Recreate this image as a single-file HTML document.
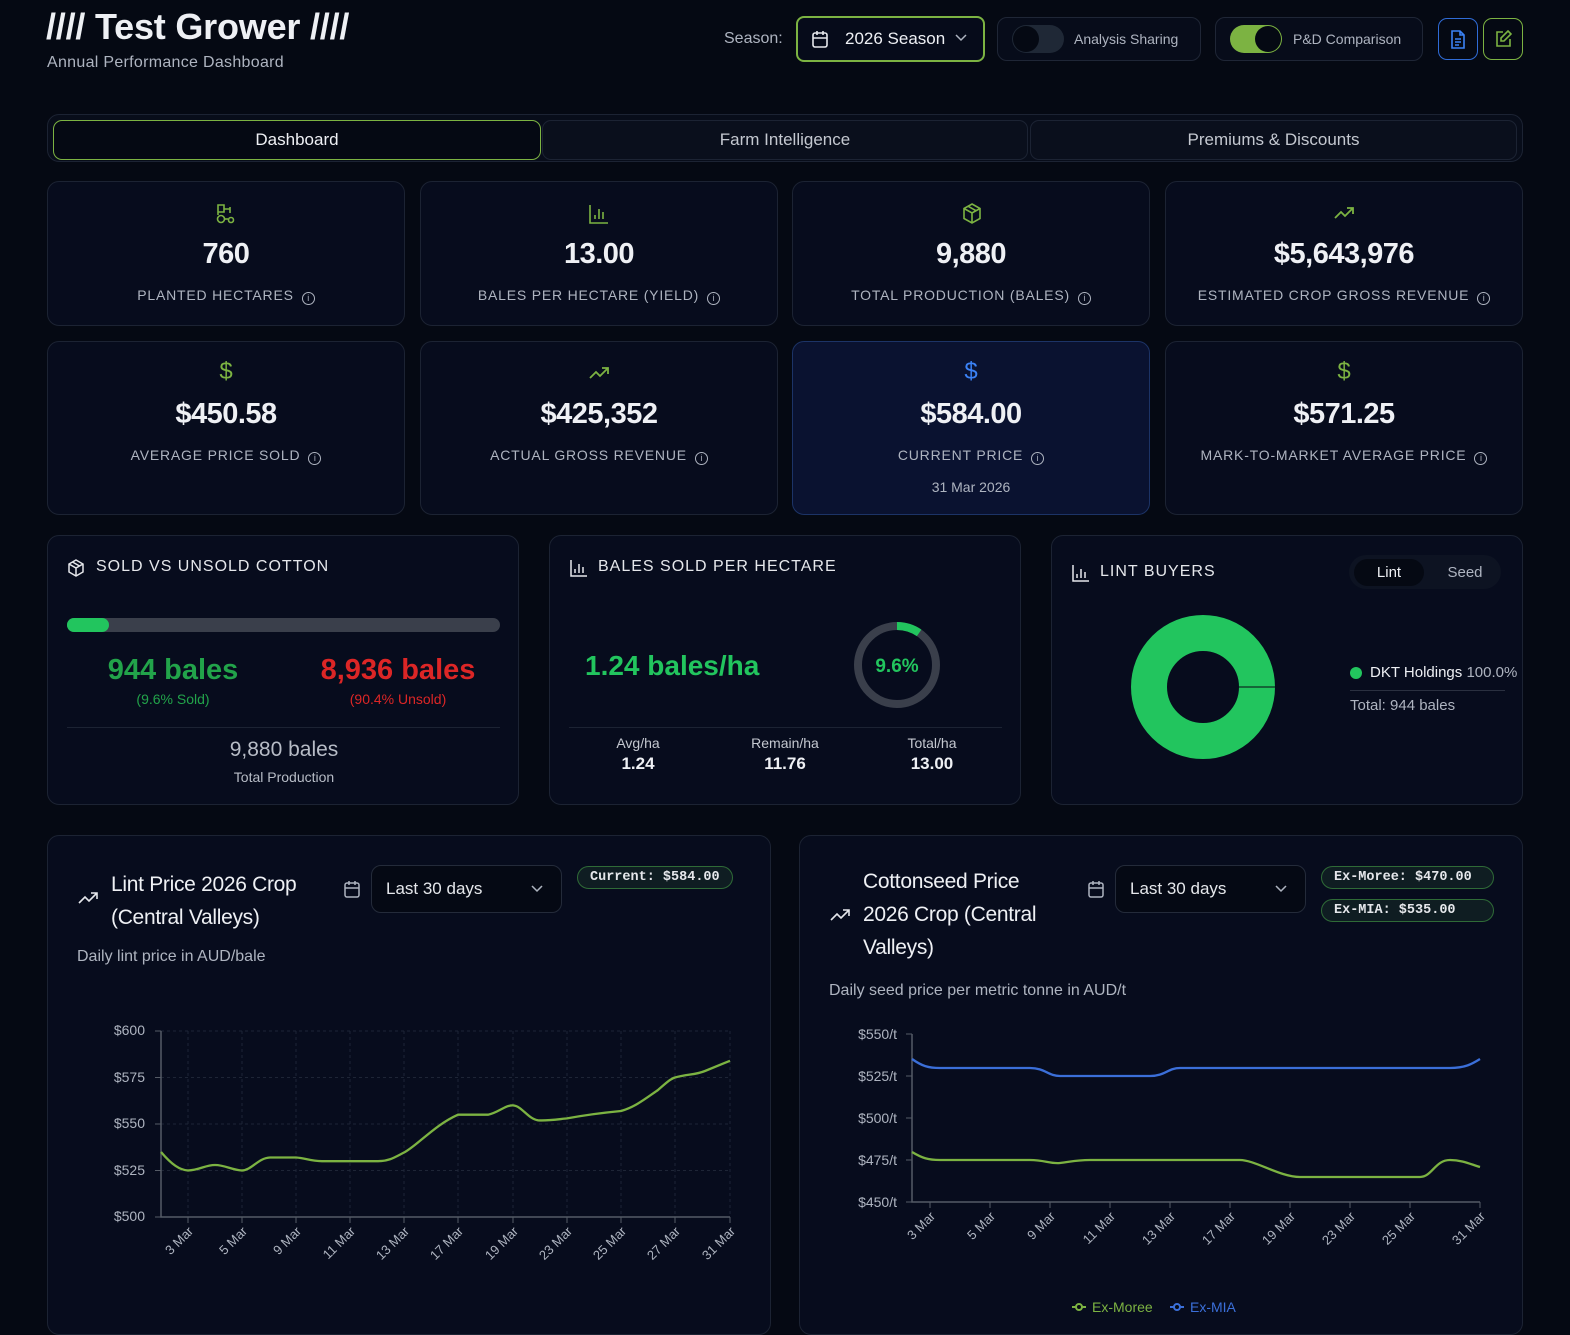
<!DOCTYPE html><html><head><meta charset="utf-8"><style>
*{box-sizing:border-box;margin:0;padding:0}
body{width:1570px;height:1318px;background:#050913;font-family:"Liberation Sans",sans-serif;color:#e5e7eb;position:relative;overflow:hidden}
.a{position:absolute}
.card{position:absolute;background:#070c1d;border:1px solid #1c2333;border-radius:12px}
.kv{position:absolute;left:0;right:0;text-align:center}
.num{font-size:29px;font-weight:bold;color:#eef0f4;letter-spacing:-0.5px}
.lab{font-size:14px;color:#aeb4c0;letter-spacing:0.8px}
.info{display:inline-block;width:13px;height:13px;border:1.3px solid #aeb4c0;border-radius:50%;vertical-align:-1px;margin-left:8px;font-size:9px;line-height:10px;text-align:center;letter-spacing:0}
.hd{font-size:16px;letter-spacing:1px;color:#e5e7eb}
.pill{position:absolute;border:1px solid #2f6b37;background:#0f1d22;border-radius:12px;font-family:"Liberation Mono",monospace;font-weight:bold;font-size:13.5px;color:#e5e7eb;padding:3px 12px}
.sel{position:absolute;border:1px solid #242b3a;background:#050914;border-radius:10px;font-size:17px;color:#e5e7eb;padding:13px 14px}
svg text{font-family:"Liberation Sans",sans-serif}
</style></head><body>

<div class="a" style="left:46px;top:6px;font-size:36px;font-weight:bold;color:#eef0f4;letter-spacing:-0.2px">//// Test Grower ////</div>
<div class="a" style="left:47px;top:54px;font-size:16px;color:#aeb4c0;letter-spacing:0.3px">Annual Performance Dashboard</div>

<div class="a" style="left:724px;top:30px;font-size:16px;color:#aeb4c0">Season:</div>
<div class="a" style="left:796px;top:16px;width:189px;height:46px;border:2px solid #7cb342;border-radius:8px;background:#060b1a"></div>
<svg class="a" style="left:811px;top:30px" width="18" height="19" viewBox="0 0 18 19" fill="none" stroke="#e5e7eb" stroke-width="1.6"><rect x="2" y="3" width="14" height="14" rx="2"/><path d="M2 8h14M6 1v4M12 1v4"/></svg>
<div class="a" style="left:845px;top:29px;font-size:17px;color:#eef0f4">2026 Season</div>
<svg class="a" style="left:955px;top:34px" width="12" height="8"><path d="M1 1l5 5 5-5" stroke="#aeb4c0" stroke-width="1.5" fill="none"/></svg>

<div class="a" style="left:997px;top:17px;width:204px;height:44px;border:1px solid #1f2636;border-radius:10px;background:#070c1a"></div>
<div class="a" style="left:1012px;top:25px;width:52px;height:28px;border-radius:14px;background:#1f2836"></div>
<div class="a" style="left:1013px;top:26px;width:26px;height:26px;border-radius:50%;background:#050913"></div>
<div class="a" style="left:1074px;top:31px;font-size:14px;color:#aeb4c0">Analysis Sharing</div>

<div class="a" style="left:1215px;top:17px;width:208px;height:44px;border:1px solid #1f2636;border-radius:10px;background:#070c1a"></div>
<div class="a" style="left:1230px;top:25px;width:52px;height:28px;border-radius:14px;background:#7cb342"></div>
<div class="a" style="left:1255px;top:26px;width:26px;height:26px;border-radius:50%;background:#050913"></div>
<div class="a" style="left:1293px;top:31px;font-size:14px;color:#aeb4c0">P&amp;D Comparison</div>

<div class="a" style="left:1438px;top:18px;width:40px;height:42px;border:1.5px solid #2f6bd6;border-radius:9px"></div>
<svg class="a" style="left:1449px;top:30px" width="18" height="19" fill="none" stroke="#3b82f6" stroke-width="1.6"><path d="M3 1h8l4 4v13H3z M11 1v4h4 M6 9h6 M6 12h6 M6 15h4"/></svg>
<div class="a" style="left:1483px;top:18px;width:40px;height:42px;border:1.5px solid #7cb342;border-radius:9px"></div>
<svg class="a" style="left:1494px;top:30px" width="18" height="18" fill="none" stroke="#7cb342" stroke-width="1.6"><path d="M9 2H3v14h13V9 M14 1l3 3-7 7H7V8z"/></svg>

<!-- tabs -->
<div class="a" style="left:47px;top:114px;width:1476px;height:48px;border:1px solid #1c2333;border-radius:12px;background:#080d1a"></div>
<div class="a" style="left:53px;top:120px;width:488px;height:40px;border:1.3px solid #7cb342;border-radius:9px;background:#050913;text-align:center;line-height:38px;font-size:17px;color:#eef0f4">Dashboard</div>
<div class="a" style="left:542px;top:120px;width:486px;height:40px;border:1px solid #1c2333;border-radius:9px;background:#0a0f1c;text-align:center;line-height:38px;font-size:17px;color:#c4c8d0">Farm Intelligence</div>
<div class="a" style="left:1030px;top:120px;width:487px;height:40px;border:1px solid #1c2333;border-radius:9px;background:#0a0f1c;text-align:center;line-height:38px;font-size:17px;color:#c4c8d0">Premiums &amp; Discounts</div>

<!-- row1 -->
<div class="card" style="left:47px;top:181px;width:358px;height:145px">
<svg class="a" style="left:167px;top:21px" width="22" height="22" fill="none" stroke="#7cb342" stroke-width="1.6"><path d="M3 2h6v7H3z M9 6h6v4 M15 4v4 M3 9v3"/><circle cx="6" cy="16" r="3.5"/><circle cx="16" cy="17" r="2.5"/><path d="M10 16h3"/></svg>
<div class="kv num" style="top:56px">760</div>
<div class="kv lab" style="top:105px">PLANTED HECTARES<span class="info">i</span></div></div>
<div class="card" style="left:420px;top:181px;width:358px;height:145px">
<svg class="a" style="left:167px;top:21px" width="22" height="22" fill="none" stroke="#7cb342" stroke-width="1.6"><path d="M2 2v18h18 M7 16v-4 M11 16V6 M15 16v-7"/></svg>
<div class="kv num" style="top:56px">13.00</div>
<div class="kv lab" style="top:105px">BALES PER HECTARE (YIELD)<span class="info">i</span></div></div>
<div class="card" style="left:792px;top:181px;width:358px;height:145px">
<svg class="a" style="left:168px;top:20px" width="22" height="24" fill="none" stroke="#7cb342" stroke-width="1.6"><path d="M11 2l8 4.5v10L11 21l-8-4.5v-10z M3 6.5l8 4.5 8-4.5 M11 11v10 M7 4.2l8 4.5"/></svg>
<div class="kv num" style="top:56px">9,880</div>
<div class="kv lab" style="top:105px">TOTAL PRODUCTION (BALES)<span class="info">i</span></div></div>
<div class="card" style="left:1165px;top:181px;width:358px;height:145px">
<svg class="a" style="left:167px;top:22px" width="24" height="18" fill="none" stroke="#7cb342" stroke-width="1.8"><path d="M2 14l6-6 4 4 8-8 M14 4h6v6"/></svg>
<div class="kv num" style="top:56px">$5,643,976</div>
<div class="kv lab" style="top:105px">ESTIMATED CROP GROSS REVENUE<span class="info">i</span></div></div>

<!-- row2 -->
<div class="card" style="left:47px;top:341px;width:358px;height:174px">
<div class="kv" style="top:16px;font-size:24px;color:#7cb342">$</div>
<div class="kv num" style="top:56px">$450.58</div>
<div class="kv lab" style="top:105px">AVERAGE PRICE SOLD<span class="info">i</span></div></div>
<div class="card" style="left:420px;top:341px;width:358px;height:174px">
<svg class="a" style="left:167px;top:22px" width="24" height="18" fill="none" stroke="#7cb342" stroke-width="1.8"><path d="M2 14l6-6 4 4 8-8 M14 4h6v6"/></svg>
<div class="kv num" style="top:56px">$425,352</div>
<div class="kv lab" style="top:105px">ACTUAL GROSS REVENUE<span class="info">i</span></div></div>
<div class="card" style="left:792px;top:341px;width:358px;height:174px;background:#0a1230;border-color:#1c3366">
<div class="kv" style="top:16px;font-size:24px;color:#3b82f6">$</div>
<div class="kv num" style="top:56px">$584.00</div>
<div class="kv lab" style="top:105px">CURRENT PRICE<span class="info">i</span></div>
<div class="kv" style="top:137px;font-size:14px;color:#aeb4c0">31 Mar 2026</div></div>
<div class="card" style="left:1165px;top:341px;width:358px;height:174px">
<div class="kv" style="top:16px;font-size:24px;color:#7cb342">$</div>
<div class="kv num" style="top:56px">$571.25</div>
<div class="kv lab" style="top:105px">MARK-TO-MARKET AVERAGE PRICE<span class="info">i</span></div></div>

<!-- row3 -->
<div class="card" style="left:47px;top:535px;width:472px;height:270px">
<svg class="a" style="left:19px;top:22px" width="18" height="20" fill="none" stroke="#e5e7eb" stroke-width="1.5"><path d="M9 2l7 4v8l-7 4-7-4V6z M2 6l7 4 7-4 M9 10v8 M5.5 4l7 4"/></svg>
<div class="a hd" style="left:48px;top:22px">SOLD VS UNSOLD COTTON</div>
<div class="a" style="left:19px;top:82px;width:433px;height:14px;border-radius:7px;background:#3a3f4b"></div>
<div class="a" style="left:19px;top:82px;width:42px;height:14px;border-radius:7px;background:#22c55e"></div>
<div class="a" style="left:20px;top:118px;width:210px;text-align:center;font-size:29px;font-weight:bold;color:#22a34a">944 bales</div>
<div class="a" style="left:20px;top:155px;width:210px;text-align:center;font-size:14px;color:#22a34a">(9.6% Sold)</div>
<div class="a" style="left:245px;top:118px;width:210px;text-align:center;font-size:29px;font-weight:bold;color:#dc2626">8,936 bales</div>
<div class="a" style="left:245px;top:155px;width:210px;text-align:center;font-size:14px;color:#dc2626">(90.4% Unsold)</div>
<div class="a" style="left:19px;top:191px;width:433px;height:1px;background:#1c2333"></div>
<div class="a" style="left:0;width:472px;top:202px;text-align:center;font-size:21px;color:#b7bcc6">9,880 bales</div>
<div class="a" style="left:0;width:472px;top:233px;text-align:center;font-size:14px;color:#b7bcc6">Total Production</div>
</div>

<div class="card" style="left:549px;top:535px;width:472px;height:270px">
<svg class="a" style="left:19px;top:23px" width="18" height="18" fill="none" stroke="#e5e7eb" stroke-width="1.5"><path d="M2 1v16h16 M6 14v-4 M10 14V5 M14 14V8"/></svg>
<div class="a hd" style="left:48px;top:22px">BALES SOLD PER HECTARE</div>
<div class="a" style="left:35px;top:114px;font-size:28px;font-weight:bold;color:#22c55e">1.24 bales/ha</div>
<svg class="a" style="left:302px;top:84px" width="90" height="90"><circle cx="45" cy="45" r="39" fill="none" stroke="#3a3f4b" stroke-width="8"/><circle cx="45" cy="45" r="39" fill="none" stroke="#22c55e" stroke-width="8" stroke-dasharray="23.5 300" transform="rotate(-90 45 45)"/><text x="45" y="52" text-anchor="middle" font-size="19" font-weight="bold" fill="#22c55e">9.6%</text></svg>
<div class="a" style="left:19px;top:191px;width:433px;height:1px;background:#1c2333"></div>
<div class="a" style="left:38px;top:199px;width:100px;text-align:center;font-size:14px;color:#c4c8d0">Avg/ha<br><b style="font-size:17px;color:#eef0f4;line-height:26px">1.24</b></div>
<div class="a" style="left:185px;top:199px;width:100px;text-align:center;font-size:14px;color:#c4c8d0">Remain/ha<br><b style="font-size:17px;color:#eef0f4;line-height:26px">11.76</b></div>
<div class="a" style="left:332px;top:199px;width:100px;text-align:center;font-size:14px;color:#c4c8d0">Total/ha<br><b style="font-size:17px;color:#eef0f4;line-height:26px">13.00</b></div>
</div>

<div class="card" style="left:1051px;top:535px;width:472px;height:270px">
<svg class="a" style="left:19px;top:28px" width="18" height="18" fill="none" stroke="#e5e7eb" stroke-width="1.5"><path d="M2 1v16h16 M6 14v-4 M10 14V5 M14 14V8"/></svg>
<div class="a hd" style="left:48px;top:27px">LINT BUYERS</div>
<div class="a" style="left:297px;top:19px;width:152px;height:34px;border-radius:17px;background:#0d1322"></div>
<div class="a" style="left:302px;top:23px;width:70px;height:27px;border-radius:14px;background:#050913;text-align:center;line-height:27px;font-size:15px;color:#eef0f4">Lint</div>
<div class="a" style="left:378px;top:23px;width:70px;height:27px;text-align:center;line-height:27px;font-size:15px;color:#aeb4c0">Seed</div>
<svg class="a" style="left:78px;top:78px" width="146" height="146"><circle cx="73" cy="73" r="54" fill="none" stroke="#22c55e" stroke-width="36"/><path d="M109 73h36" stroke="#050913" stroke-width="1"/></svg>
<div class="a" style="left:298px;top:131px;width:12px;height:12px;border-radius:50%;background:#22c55e"></div>
<div class="a" style="left:318px;top:128px;font-size:15px;color:#eef0f4">DKT Holdings <span style="color:#aeb4c0">100.0%</span></div>
<div class="a" style="left:298px;top:154px;width:155px;height:1px;background:#2a3040"></div>
<div class="a" style="left:298px;top:161px;font-size:15px;color:#aeb4c0">Total: 944 bales</div>
</div>

<!-- charts -->
<div class="card" style="left:47px;top:835px;width:724px;height:500px">
<svg class="a" style="left:30px;top:54px" width="22" height="16" fill="none" stroke="#e5e7eb" stroke-width="1.6"><path d="M1 13l6-6 4 4 8-8 M13 3h6v6"/></svg>
<div class="a" style="left:63px;top:32px;font-size:21px;line-height:33px;color:#eef0f4;letter-spacing:-0.3px">Lint Price 2026 Crop<br>(Central Valleys)</div>
<svg class="a" style="left:295px;top:44px" width="18" height="19" fill="none" stroke="#aeb4c0" stroke-width="1.5"><rect x="2" y="3" width="14" height="14" rx="2"/><path d="M2 8h14M6 1v4M12 1v4"/></svg>
<div class="sel" style="left:323px;top:29px;width:191px;height:48px">Last 30 days</div>
<svg class="a" style="left:483px;top:49px" width="12" height="8"><path d="M1 1l5 5 5-5" stroke="#aeb4c0" stroke-width="1.5" fill="none"/></svg>
<div class="pill" style="left:529px;top:30px">Current: $584.00</div>
<div class="a" style="left:29px;top:112px;font-size:16px;color:#aeb4c0">Daily lint price in AUD/bale</div>
</div>
<div class="card" style="left:799px;top:835px;width:724px;height:500px">
<svg class="a" style="left:30px;top:71px" width="22" height="16" fill="none" stroke="#e5e7eb" stroke-width="1.6"><path d="M1 13l6-6 4 4 8-8 M13 3h6v6"/></svg>
<div class="a" style="left:63px;top:29px;font-size:21px;line-height:33px;color:#eef0f4;letter-spacing:-0.3px">Cottonseed Price<br>2026 Crop (Central<br>Valleys)</div>
<svg class="a" style="left:287px;top:44px" width="18" height="19" fill="none" stroke="#aeb4c0" stroke-width="1.5"><rect x="2" y="3" width="14" height="14" rx="2"/><path d="M2 8h14M6 1v4M12 1v4"/></svg>
<div class="sel" style="left:315px;top:29px;width:191px;height:48px">Last 30 days</div>
<svg class="a" style="left:475px;top:49px" width="12" height="8"><path d="M1 1l5 5 5-5" stroke="#aeb4c0" stroke-width="1.5" fill="none"/></svg>
<div class="pill" style="left:521px;top:30px;width:173px">Ex-Moree: $470.00</div>
<div class="pill" style="left:521px;top:63px;width:173px">Ex-MIA: $535.00</div>
<div class="a" style="left:29px;top:146px;font-size:16px;color:#aeb4c0">Daily seed price per metric tonne in AUD/t</div>
</div>

<svg class="a" style="left:0;top:0" width="1570" height="1318">
<g stroke="#1e2536" stroke-dasharray="3 3" stroke-width="1">
<path d="M161 1031H730 M161 1077.5H730 M161 1124H730 M161 1170.5H730"/>
<path d="M188 1031V1217 M242 1031V1217 M296 1031V1217 M350 1031V1217 M404 1031V1217 M458 1031V1217 M513 1031V1217 M567 1031V1217 M621 1031V1217 M675 1031V1217 M730 1031V1217"/>
</g>
<path d="M161 1031V1217H730" stroke="#555b66" stroke-width="1.5" fill="none"/>
<g stroke="#555b66"><path d="M188 1217v6M242 1217v6M296 1217v6M350 1217v6M404 1217v6M458 1217v6M513 1217v6M567 1217v6M621 1217v6M675 1217v6M730 1217v6M155 1031h6M155 1077.5h6M155 1124h6M155 1170.5h6M155 1217h6"/></g>
<g font-size="14" fill="#aeb4c0" text-anchor="end"><text x="145" y="1035">$600</text><text x="145" y="1082">$575</text><text x="145" y="1128">$550</text><text x="145" y="1175">$525</text><text x="145" y="1221">$500</text></g>
<g font-size="13" fill="#aeb4c0" text-anchor="end">
<text transform="translate(194,1232) rotate(-45)">3 Mar</text><text transform="translate(248,1232) rotate(-45)">5 Mar</text><text transform="translate(302,1232) rotate(-45)">9 Mar</text><text transform="translate(356,1232) rotate(-45)">11 Mar</text><text transform="translate(410,1232) rotate(-45)">13 Mar</text><text transform="translate(464,1232) rotate(-45)">17 Mar</text><text transform="translate(519,1232) rotate(-45)">19 Mar</text><text transform="translate(573,1232) rotate(-45)">23 Mar</text><text transform="translate(627,1232) rotate(-45)">25 Mar</text><text transform="translate(681,1232) rotate(-45)">27 Mar</text><text transform="translate(736,1232) rotate(-45)">31 Mar</text></g>
<path d="M161 1152 C172 1165,180 1170,188 1170.5 C200 1170,205 1165,215 1165 C225 1165,232 1170,242 1170.5 C252 1170,258 1158,270 1157.5 L296 1157.5 C305 1158,310 1161,322 1161.2 L378 1161.2 C390 1161,395 1157,405 1152 C420 1143,435 1125,458 1114.7 L488 1114.7 C498 1113,505 1105,513 1105.4 C522 1106,528 1119,538 1120.3 C548 1121,560 1119,567 1118.4 C580 1116,600 1113,621 1111 C635 1107,645 1099,658 1090 C665 1084,670 1079,675 1077.5 C688 1074,695 1075,705 1071 C715 1067,722 1064,730 1060.8" stroke="#7cb342" stroke-width="2.3" fill="none"/>

<path d="M912 1034V1202H1480" stroke="#555b66" stroke-width="1.5" fill="none"/>
<g stroke="#555b66"><path d="M930 1202v6M990 1202v6M1050 1202v6M1110 1202v6M1170 1202v6M1230 1202v6M1290 1202v6M1350 1202v6M1410 1202v6M1480 1202v6M906 1034h6M906 1076h6M906 1118h6M906 1160h6M906 1202h6"/></g>
<g font-size="14" fill="#aeb4c0" text-anchor="end"><text x="897" y="1039">$550/t</text><text x="897" y="1081">$525/t</text><text x="897" y="1123">$500/t</text><text x="897" y="1165">$475/t</text><text x="897" y="1207">$450/t</text></g>
<g font-size="13" fill="#aeb4c0" text-anchor="end">
<text transform="translate(936,1217) rotate(-45)">3 Mar</text><text transform="translate(996,1217) rotate(-45)">5 Mar</text><text transform="translate(1056,1217) rotate(-45)">9 Mar</text><text transform="translate(1116,1217) rotate(-45)">11 Mar</text><text transform="translate(1176,1217) rotate(-45)">13 Mar</text><text transform="translate(1236,1217) rotate(-45)">17 Mar</text><text transform="translate(1296,1217) rotate(-45)">19 Mar</text><text transform="translate(1356,1217) rotate(-45)">23 Mar</text><text transform="translate(1416,1217) rotate(-45)">25 Mar</text><text transform="translate(1486,1217) rotate(-45)">31 Mar</text></g>
<path d="M912 1059 C922 1066,928 1068,940 1068 L1030 1068 C1045 1068,1048 1076,1060 1076 L1150 1076 C1165 1076,1168 1068,1180 1068 L1450 1068 C1465 1068,1472 1064,1480 1059" stroke="#3b6fd9" stroke-width="2.3" fill="none"/>
<path d="M912 1152 C922 1158,928 1160,940 1160 L1030 1160 C1045 1160,1050 1164,1060 1163 C1070 1162,1075 1160,1090 1160 L1240 1160 C1255 1160,1280 1177,1300 1177 L1420 1177 C1432 1177,1435 1160,1450 1160 C1462 1160,1470 1164,1480 1167" stroke="#7cb342" stroke-width="2.3" fill="none"/>
<g font-size="14"><path d="M1072 1307h14" stroke="#7cb342" stroke-width="2"/><circle cx="1079" cy="1307" r="3" fill="#050913" stroke="#7cb342" stroke-width="2"/><text x="1092" y="1312" fill="#7cb342">Ex-Moree</text>
<path d="M1170 1307h14" stroke="#3b6fd9" stroke-width="2"/><circle cx="1177" cy="1307" r="3" fill="#050913" stroke="#3b6fd9" stroke-width="2"/><text x="1190" y="1312" fill="#3b6fd9">Ex-MIA</text></g>
</svg>
</body></html>
